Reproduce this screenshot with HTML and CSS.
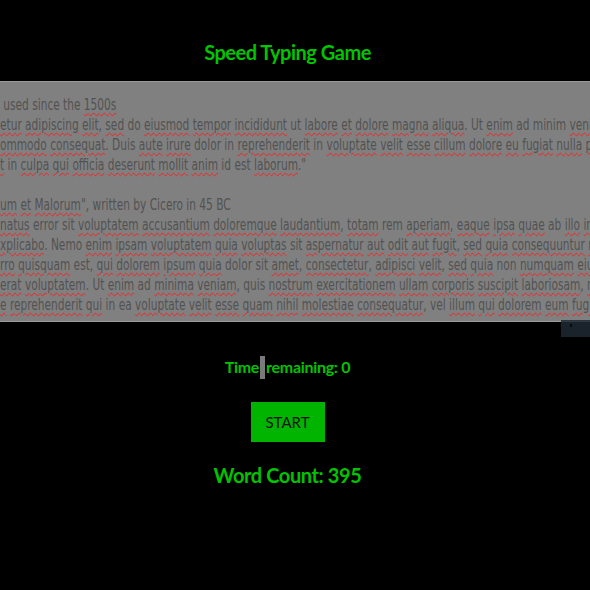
FILE: index.html
```html
<!DOCTYPE html>
<html lang="en">
<head>
<meta charset="utf-8">
<title>Speed Typing Game</title>
<link rel="stylesheet" href="styles.css">
</head>
<body>
<h1 class="title">Speed Typing Game</h1>
<div class="editor">
  <div class="text">
    <div class="line"> used since the <span class="m">1500s</span></div>
    <div class="line"><span class="m">etur</span> <span class="m">adipiscing</span> <span class="m">elit</span>, <span class="m">sed</span> do <span class="m">eiusmod</span> <span class="m">tempor</span> <span class="m">incididunt</span> ut <span class="m">labore</span> <span class="m">et</span> <span class="m">dolore</span> <span class="m">magna</span> <span class="m">aliqua</span>. Ut <span class="m">enim</span> ad minim <span class="m">veniam</span>, quis <span class="m">nostrud</span></div>
    <div class="line"><span class="m">ommodo</span> <span class="m">consequat</span>. Duis <span class="m">aute</span> <span class="m">irure</span> dolor in <span class="m">reprehenderit</span> in <span class="m">voluptate</span> <span class="m">velit</span> <span class="m">esse</span> <span class="m">cillum</span> <span class="m">dolore</span> <span class="m">eu</span> <span class="m">fugiat</span> <span class="m">nulla</span> <span class="m">pariatur</span>.</div>
    <div class="line"><span class="m">t</span> in <span class="m">culpa</span> <span class="m">qui</span> <span class="m">officia</span> <span class="m">deserunt</span> <span class="m">mollit</span> <span class="m">anim</span> id est <span class="m">laborum</span>."</div>
    <div class="line"> </div>
    <div class="line"><span class="m">um</span> <span class="m">et</span> <span class="m">Malorum</span>", written by Cicero in 45 BC</div>
    <div class="line"><span class="m">natus</span> error sit <span class="m">voluptatem</span> <span class="m">accusantium</span> <span class="m">doloremque</span> <span class="m">laudantium</span>, <span class="m">totam</span> rem <span class="m">aperiam</span>, <span class="m">eaque</span> <span class="m">ipsa</span> <span class="m">quae</span> ab <span class="m">illo</span> <span class="m">inventore</span></div>
    <div class="line"><span class="m">xplicabo</span>. Nemo <span class="m">enim</span> <span class="m">ipsam</span> <span class="m">voluptatem</span> <span class="m">quia</span> <span class="m">voluptas</span> sit <span class="m">aspernatur</span> <span class="m">aut</span> <span class="m">odit</span> <span class="m">aut</span> <span class="m">fugit</span>, <span class="m">sed</span> <span class="m">quia</span> <span class="m">consequuntur</span> <span class="m">magni</span></div>
    <div class="line"><span class="m">rro</span> <span class="m">quisquam</span> est, <span class="m">qui</span> <span class="m">dolorem</span> <span class="m">ipsum</span> <span class="m">quia</span> dolor sit <span class="m">amet</span>, <span class="m">consectetur</span>, <span class="m">adipisci</span> <span class="m">velit</span>, <span class="m">sed</span> <span class="m">quia</span> non <span class="m">numquam</span> <span class="m">eius</span> <span class="m">modi</span></div>
    <div class="line"><span class="m">erat</span> <span class="m">voluptatem</span>. Ut <span class="m">enim</span> ad <span class="m">minima</span> <span class="m">veniam</span>, quis <span class="m">nostrum</span> <span class="m">exercitationem</span> <span class="m">ullam</span> <span class="m">corporis</span> <span class="m">suscipit</span> <span class="m">laboriosam</span>, <span class="m">nisi</span></div>
    <div class="line"><span class="m">e</span> <span class="m">reprehenderit</span> <span class="m">qui</span> in ea <span class="m">voluptate</span> <span class="m">velit</span> <span class="m">esse</span> <span class="m">quam</span> <span class="m">nihil</span> <span class="m">molestiae</span> <span class="m">consequatur</span>, vel <span class="m">illum</span> <span class="m">qui</span> <span class="m">dolorem</span> <span class="m">eum</span> <span class="m">fugiat</span></div>
  </div>
  <div class="grip"><span class="grip-dot"></span></div>
</div>
<p class="timer">Time<span class="caret"></span>remaining: 0</p>
<button class="start" type="button">START</button>
<p class="count">Word Count: 395</p>
</body>
</html>
```

FILE: styles.css
```css
html, body {
  margin: 0;
  padding: 0;
  background: #000;
}

body {
  display: flex;
  flex-direction: column;
  align-items: center;
  padding-right: 15px;
  height: 590px;
  box-sizing: border-box;
  font-family: "Comic Sans MS", "Lato", "DejaVu Sans", sans-serif;
  color: #00c400;
  overflow: hidden;
}

.title {
  margin: 40px 0 0;
  font-size: 20px;
  line-height: 24px;
  letter-spacing: -0.5px;
  font-weight: bold;
}

.editor {
  position: relative;
  align-self: stretch;
  margin-right: -15px;
  margin-top: 17px;
  height: 239px;
  background: #808080;
  border-top: 1px solid #9a9a9a;
  border-bottom: 1px solid #9a9a9a;
}

.text {
  width: 760px;
  height: 100%;
  overflow: hidden;
  padding-top: 13px;
  box-sizing: border-box;
  font-family: "DejaVu Sans Condensed", "DejaVu Sans", sans-serif;
  font-size: 15px;
  line-height: 20px;
  color: #525252;
  transform: scaleX(0.785);
  transform-origin: left top;
}

.line {
  white-space: pre;
  height: 20px;
}

.m {
  text-decoration: underline wavy #ff1a1a;
  text-decoration-thickness: 1px;
  text-underline-offset: 2px;
}

.grip {
  position: absolute;
  right: 0;
  bottom: -16px;
  width: 29px;
  height: 17px;
  background: rgba(30, 40, 52, 0.85);
}

.grip-dot {
  position: absolute;
  left: 9px;
  top: 4px;
  width: 2px;
  height: 3px;
  background: #0a0a0a;
}

.timer {
  margin: 33px 0 0;
  font-size: 16px;
  line-height: 24px;
  letter-spacing: -0.3px;
  font-weight: bold;
  display: flex;
  align-items: center;
}

.caret {
  display: inline-block;
  width: 5px;
  height: 23px;
  background: #7a7a7a;
  margin: 0 1px;
}

.start {
  margin-top: 23px;
  width: 74px;
  height: 40px;
  border: none;
  background: #00b400;
  color: #111;
  font-family: "Comic Sans MS", "Lato", "DejaVu Sans", sans-serif;
  font-size: 15px;
  padding: 0;
}

.count {
  margin: 19px 0 0;
  font-size: 20px;
  line-height: 28px;
  letter-spacing: -0.4px;
  font-weight: bold;
}
```
